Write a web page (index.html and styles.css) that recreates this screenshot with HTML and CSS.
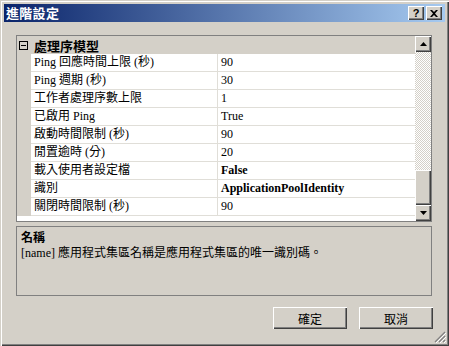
FILE: index.html
```html
<!DOCTYPE html>
<html lang="zh-Hant">

<head>
  <meta charset="UTF-8">
  <title>進階設定</title>
  <link rel="stylesheet" href="styles.css">
</head>

<body>
  <div class="window">
    <!-- Barra de título -->
    <div class="titlebar">
      <span class="title">進階設定</span>
      <div class="caption-buttons">
        <span class="cap-btn help">?</span>
        <span class="cap-btn close">
          <svg width="8" height="7" viewBox="0 0 8 7"><path d="M0 0h2l2 2 2-2h2L5 3.5 8 7H6L4 5 2 7H0l3-3.5z" fill="#000"/></svg>
        </span>
      </div>
    </div>

    <div class="content">
      <!-- Cuadrícula de propiedades -->
      <div class="grid">
        <div class="grid-body">
          <div class="category">
            <span class="toggle">
              <svg width="9" height="9" viewBox="0 0 9 9"><rect x="0.5" y="0.5" width="8" height="8" fill="none" stroke="#000"/><path d="M2 4.5h5" stroke="#000"/></svg>
            </span>
            <span class="category-name">處理序模型</span>
          </div>
          <div class="row"><span class="name">Ping 回應時間上限 (秒)</span><span class="value">90</span></div>
          <div class="row"><span class="name">Ping 週期 (秒)</span><span class="value">30</span></div>
          <div class="row"><span class="name">工作者處理序數上限</span><span class="value">1</span></div>
          <div class="row"><span class="name">已啟用 Ping</span><span class="value">True</span></div>
          <div class="row"><span class="name">啟動時間限制 (秒)</span><span class="value">90</span></div>
          <div class="row"><span class="name">閒置逾時 (分)</span><span class="value">20</span></div>
          <div class="row"><span class="name">載入使用者設定檔</span><span class="value bold">False</span></div>
          <div class="row"><span class="name">識別</span><span class="value bold">ApplicationPoolIdentity</span></div>
          <div class="row"><span class="name">關閉時間限制 (秒)</span><span class="value">90</span></div>
        </div>
        <div class="scrollbar">
          <span class="sb-btn">
            <svg width="7" height="4" viewBox="0 0 7 4"><path d="M3.5 0L7 4H0z" fill="#000"/></svg>
          </span>
          <span class="sb-track"></span>
          <span class="sb-thumb"></span>
          <span class="sb-btn">
            <svg width="7" height="4" viewBox="0 0 7 4"><path d="M0 0h7L3.5 4z" fill="#000"/></svg>
          </span>
        </div>
      </div>

      <!-- Panel de descripción -->
      <div class="desc">
        <p class="desc-title">名稱</p>
        <p class="desc-text">[name] 應用程式集區名稱是應用程式集區的唯一識別碼。</p>
      </div>

      <div class="actions">
        <button class="btn">確定</button>
        <button class="btn">取消</button>
      </div>
    </div>

    <span class="grip">
      <svg width="12" height="12" viewBox="0 0 12 12">
        <path d="M11 1L1 11M11 5L5 11M11 9L9 11" stroke="#808080" stroke-width="1.2"/>
        <path d="M12 2L2 12M12 6L6 12M12 10L10 12" stroke="#fff" stroke-width="1"/>
      </svg>
    </span>
  </div>
</body>

</html>
```

FILE: styles.css
```css
* {
  margin: 0;
  padding: 0;
  box-sizing: border-box;
}

body {
  background: #d4d0c8;
  font-family: "Noto Sans CJK TC", sans-serif;
  font-size: 12px;
  color: #000;
}

/* Ventana */
.window {
  position: relative;
  width: 449px;
  height: 346px;
  padding: 4px;
  background: #d4d0c8;
  box-shadow: inset 1px 1px #d4d0c8, inset 2px 2px #fff, inset -1px -1px #404040, inset -2px -2px #808080;
  display: flex;
  flex-direction: column;
}

.titlebar {
  height: 18px;
  background: linear-gradient(to right, #0a246a, #a6caf0);
  display: flex;
  align-items: center;
  justify-content: space-between;
  padding: 0 3px 0 2px;
}

.title {
  color: #fff;
  font-weight: bold;
  font-size: 13px;
  line-height: 18px;
  letter-spacing: 0.3px;
}

.caption-buttons {
  display: flex;
  gap: 2px;
}

.cap-btn,
.sb-btn,
.sb-thumb,
.btn {
  background: #d4d0c8;
  box-shadow: inset 1px 1px #fff, inset -1px -1px #404040, inset -2px -2px #808080;
}

.cap-btn {
  width: 16px;
  height: 14px;
  display: flex;
  align-items: center;
  justify-content: center;
}

.help {
  font-family: "Liberation Sans", sans-serif;
  font-weight: bold;
  font-size: 11px;
  line-height: 14px;
  padding-bottom: 1px;
}

.content {
  display: flex;
  flex-direction: column;
  padding: 13px 13px 0 12px;
}

/* Cuadrícula de propiedades */
.grid {
  height: 187px;
  border: 1px solid #808080;
  background: #fff;
  display: flex;
}

.grid-body {
  flex: 1;
  display: flex;
  flex-direction: column;
}

.category {
  height: 18px;
  background: #d4d0c8;
  display: flex;
  align-items: center;
}

.toggle {
  width: 16px;
  display: flex;
  padding-left: 2px;
}

.category-name {
  font-weight: bold;
  font-size: 13px;
  padding-left: 1px;
}

.row {
  height: 18px;
  display: grid;
  grid-template-columns: 14px 186px 1fr;
  font-family: "Liberation Serif", "Noto Sans CJK TC", serif;
  line-height: 17px;
}

.row::before {
  content: "";
  background: #d4d0c8;
}

.name,
.value {
  border-bottom: 1px solid #e0ded8;
  padding-left: 3px;
  white-space: nowrap;
}

.value {
  border-left: 1px solid #e0ded8;
  padding-left: 3px;
}

.bold {
  font-weight: bold;
}

/* Barra de desplazamiento */
.scrollbar {
  width: 16px;
  display: flex;
  flex-direction: column;
}

.sb-btn {
  height: 16px;
  display: flex;
  align-items: center;
  justify-content: center;
}

.sb-track {
  flex: 1;
  background: repeating-conic-gradient(#d4d0c8 0 25%, #fff 0 50%) 0 0 / 2px 2px;
}

.sb-thumb {
  height: 35px;
}

/* Panel de descripción */
.desc {
  margin-top: 4px;
  height: 70px;
  border: 1px solid #808080;
  padding: 2px 4px;
}

.desc-title {
  font-weight: bold;
  line-height: 15px;
}

.desc-text {
  font-family: "Liberation Serif", "Noto Sans CJK TC", serif;
  line-height: 18px;
}

/* Botones */
.actions {
  display: flex;
  justify-content: flex-end;
  gap: 12px;
  margin-top: 11px;
  margin-right: -1px;
}

.btn {
  width: 74px;
  height: 22px;
  border: none;
  font-family: "Noto Sans CJK TC", sans-serif;
  font-size: 12px;
  color: #000;
}

.grip {
  position: absolute;
  right: 3px;
  bottom: 3px;
  display: flex;
}
```
